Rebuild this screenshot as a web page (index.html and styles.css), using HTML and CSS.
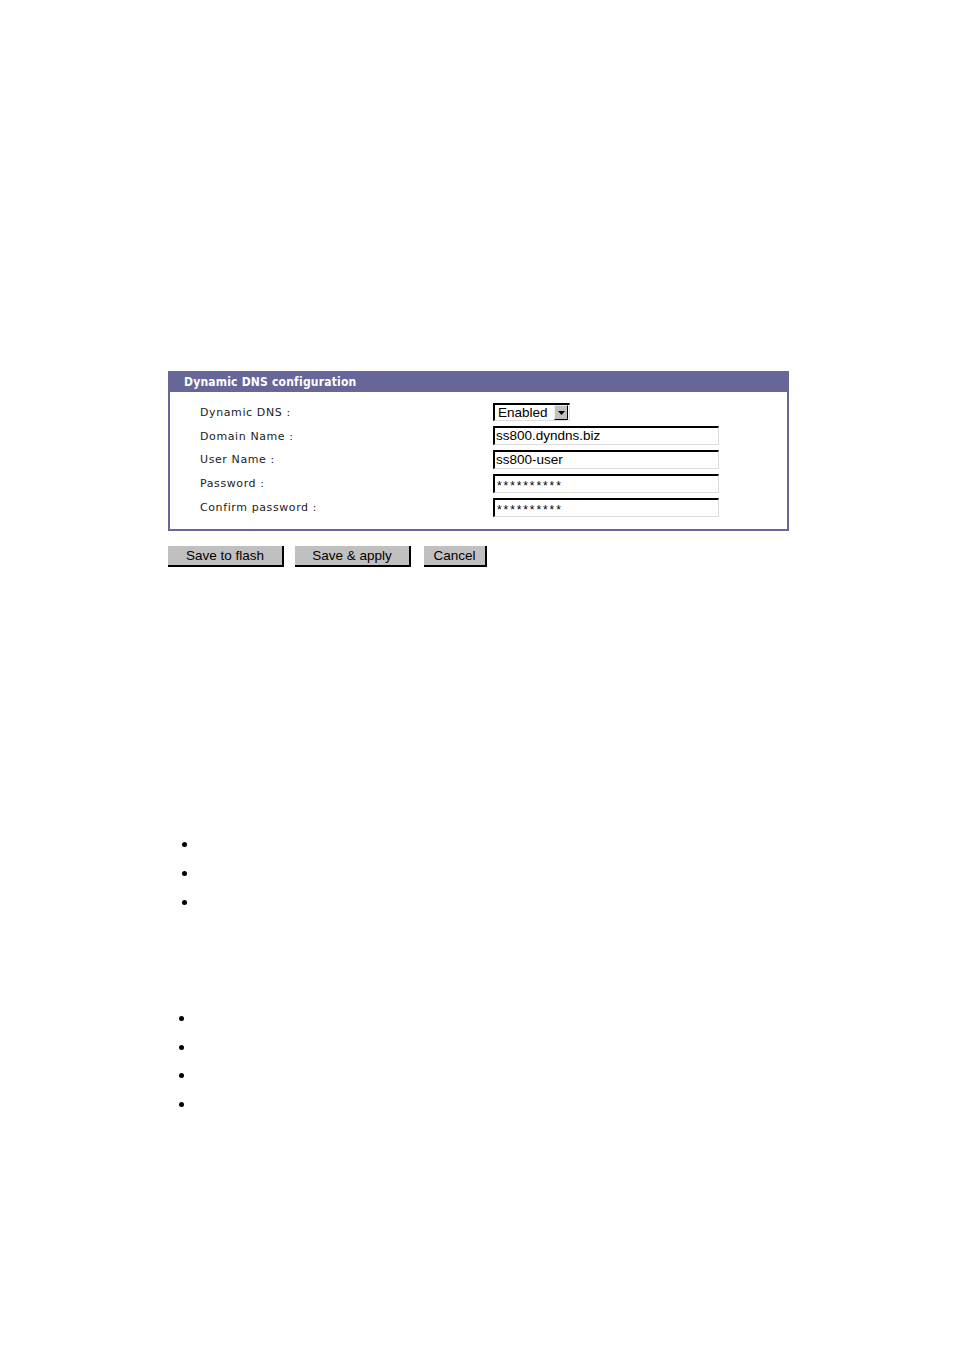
FILE: index.html
```html
<!DOCTYPE html>
<html>
<head>
<meta charset="utf-8">
<title>Dynamic DNS configuration</title>
<link rel="stylesheet" href="styles.css">
</head>
<body>
<div class="page">
  <div class="panel">
    <div class="panel-head">Dynamic DNS configuration</div>
    <div class="panel-body">
      <div class="row"><span class="label">Dynamic DNS :</span><span class="field"><span class="select"><span class="select-text">Enabled</span><span class="select-btn"><svg width="7" height="4" viewBox="0 0 7 4"><path d="M0 0h7L3.5 4z" fill="#000"/></svg></span></span></span></div>
      <div class="row"><span class="label">Domain Name :</span><span class="field"><span class="input">ss800.dyndns.biz</span></span></div>
      <div class="row"><span class="label">User Name :</span><span class="field"><span class="input">ss800-user</span></span></div>
      <div class="row"><span class="label">Password :</span><span class="field"><span class="input pw">**********</span></span></div>
      <div class="row"><span class="label">Confirm password :</span><span class="field"><span class="input pw">**********</span></span></div>
    </div>
  </div>
  <div class="buttons">
    <span class="btn btn-wide">Save to flash</span>
    <span class="btn btn-wide">Save &amp; apply</span>
    <span class="btn btn-cancel">Cancel</span>
  </div>
  <ul class="list list-a">
    <li></li><li></li><li></li>
  </ul>
  <ul class="list list-b">
    <li></li><li></li><li></li><li></li>
  </ul>
</div>
</body>
</html>
```

FILE: styles.css
```css
html, body {
  margin: 0;
  padding: 0;
  background: #fff;
}
.page {
  padding: 371px 0 0 168px;
  width: 621px;
  font-family: "DejaVu Sans", Verdana, sans-serif;
}
.panel {
  width: 617px;
  border: 2px solid #666699;
  border-top: 0;
}
.panel-head {
  background: #666699;
  color: #fff;
  height: 21px;
  line-height: 22px;
  padding-left: 14px;
  font-family: "DejaVu Sans Condensed", "DejaVu Sans", sans-serif;
  font-weight: bold;
  font-size: 12px;
  letter-spacing: 0.2px;
}
.panel-body {
  padding: 8px 0 10px 30px;
}
.row {
  display: flex;
  align-items: center;
  height: 24px;
}
.row:nth-child(2) { height: 23px; }
.label {
  width: 293px;
  font-size: 11px;
  color: #222;
  letter-spacing: 0.6px;
  padding-top: 1px;
}
.field {
  display: flex;
  align-items: center;
}
.select {
  display: flex;
  align-items: center;
  width: 71px;
  height: 15px;
  border-top: 2px solid #000;
  border-left: 2px solid #000;
  border-right: 1px solid #ddd;
  border-bottom: 1px solid #ddd;
  font-family: "Liberation Sans", Arial, sans-serif;
  font-size: 13.5px;
  color: #000;
  padding-left: 3px;
}
.select-text { flex: 1; line-height: 15px; }
.select-btn {
  width: 12px;
  height: 13px;
  margin-right: 1px;
  background: #c0c0c0;
  border-top: 1px solid #eee;
  border-left: 1px solid #eee;
  border-right: 1px solid #000;
  border-bottom: 1px solid #000;
  display: flex;
  align-items: center;
  justify-content: center;
}
.input {
  display: block;
  box-sizing: border-box;
  width: 226px;
  height: 19px;
  border-top: 2px solid #000;
  border-left: 2px solid #000;
  border-right: 1px solid #ddd;
  border-bottom: 1px solid #ddd;
  font-family: "Liberation Sans", Arial, sans-serif;
  font-size: 13.5px;
  line-height: 15px;
  padding-left: 1px;
  color: #000;
}
.input.pw {
  font-size: 12px;
  letter-spacing: 1.9px;
  line-height: 20px;
  padding-left: 2px;
}
.buttons {
  display: flex;
  margin-top: 15px;
  height: 21px;
}
.btn {
  box-sizing: border-box;
  height: 21px;
  background: #c0c0c0;
  border-right: 2px solid #000;
  border-bottom: 2px solid #000;
  font-family: "Liberation Sans", Arial, sans-serif;
  font-size: 13.5px;
  line-height: 19px;
  color: #000;
  text-align: center;
}
.btn-wide { width: 116px; margin-right: 11px; }
.btn-wide:nth-child(2) { margin-right: 13px; }
.btn-cancel { width: 63px; }
.list {
  list-style: none;
  margin: 0;
  padding: 0;
}
.list li {
  display: flex;
  align-items: center;
  height: 29px;
}
.list li::before {
  content: "";
  width: 5px;
  height: 5px;
  border-radius: 50%;
  background: #000;
}
.list-a {
  margin-top: 263px;
}
.list-a li::before { margin-left: 14px; }
.list-b {
  margin-top: 87px;
}
.list-b li { height: 28.7px; }
.list-b li::before { margin-left: 11px; }
```
